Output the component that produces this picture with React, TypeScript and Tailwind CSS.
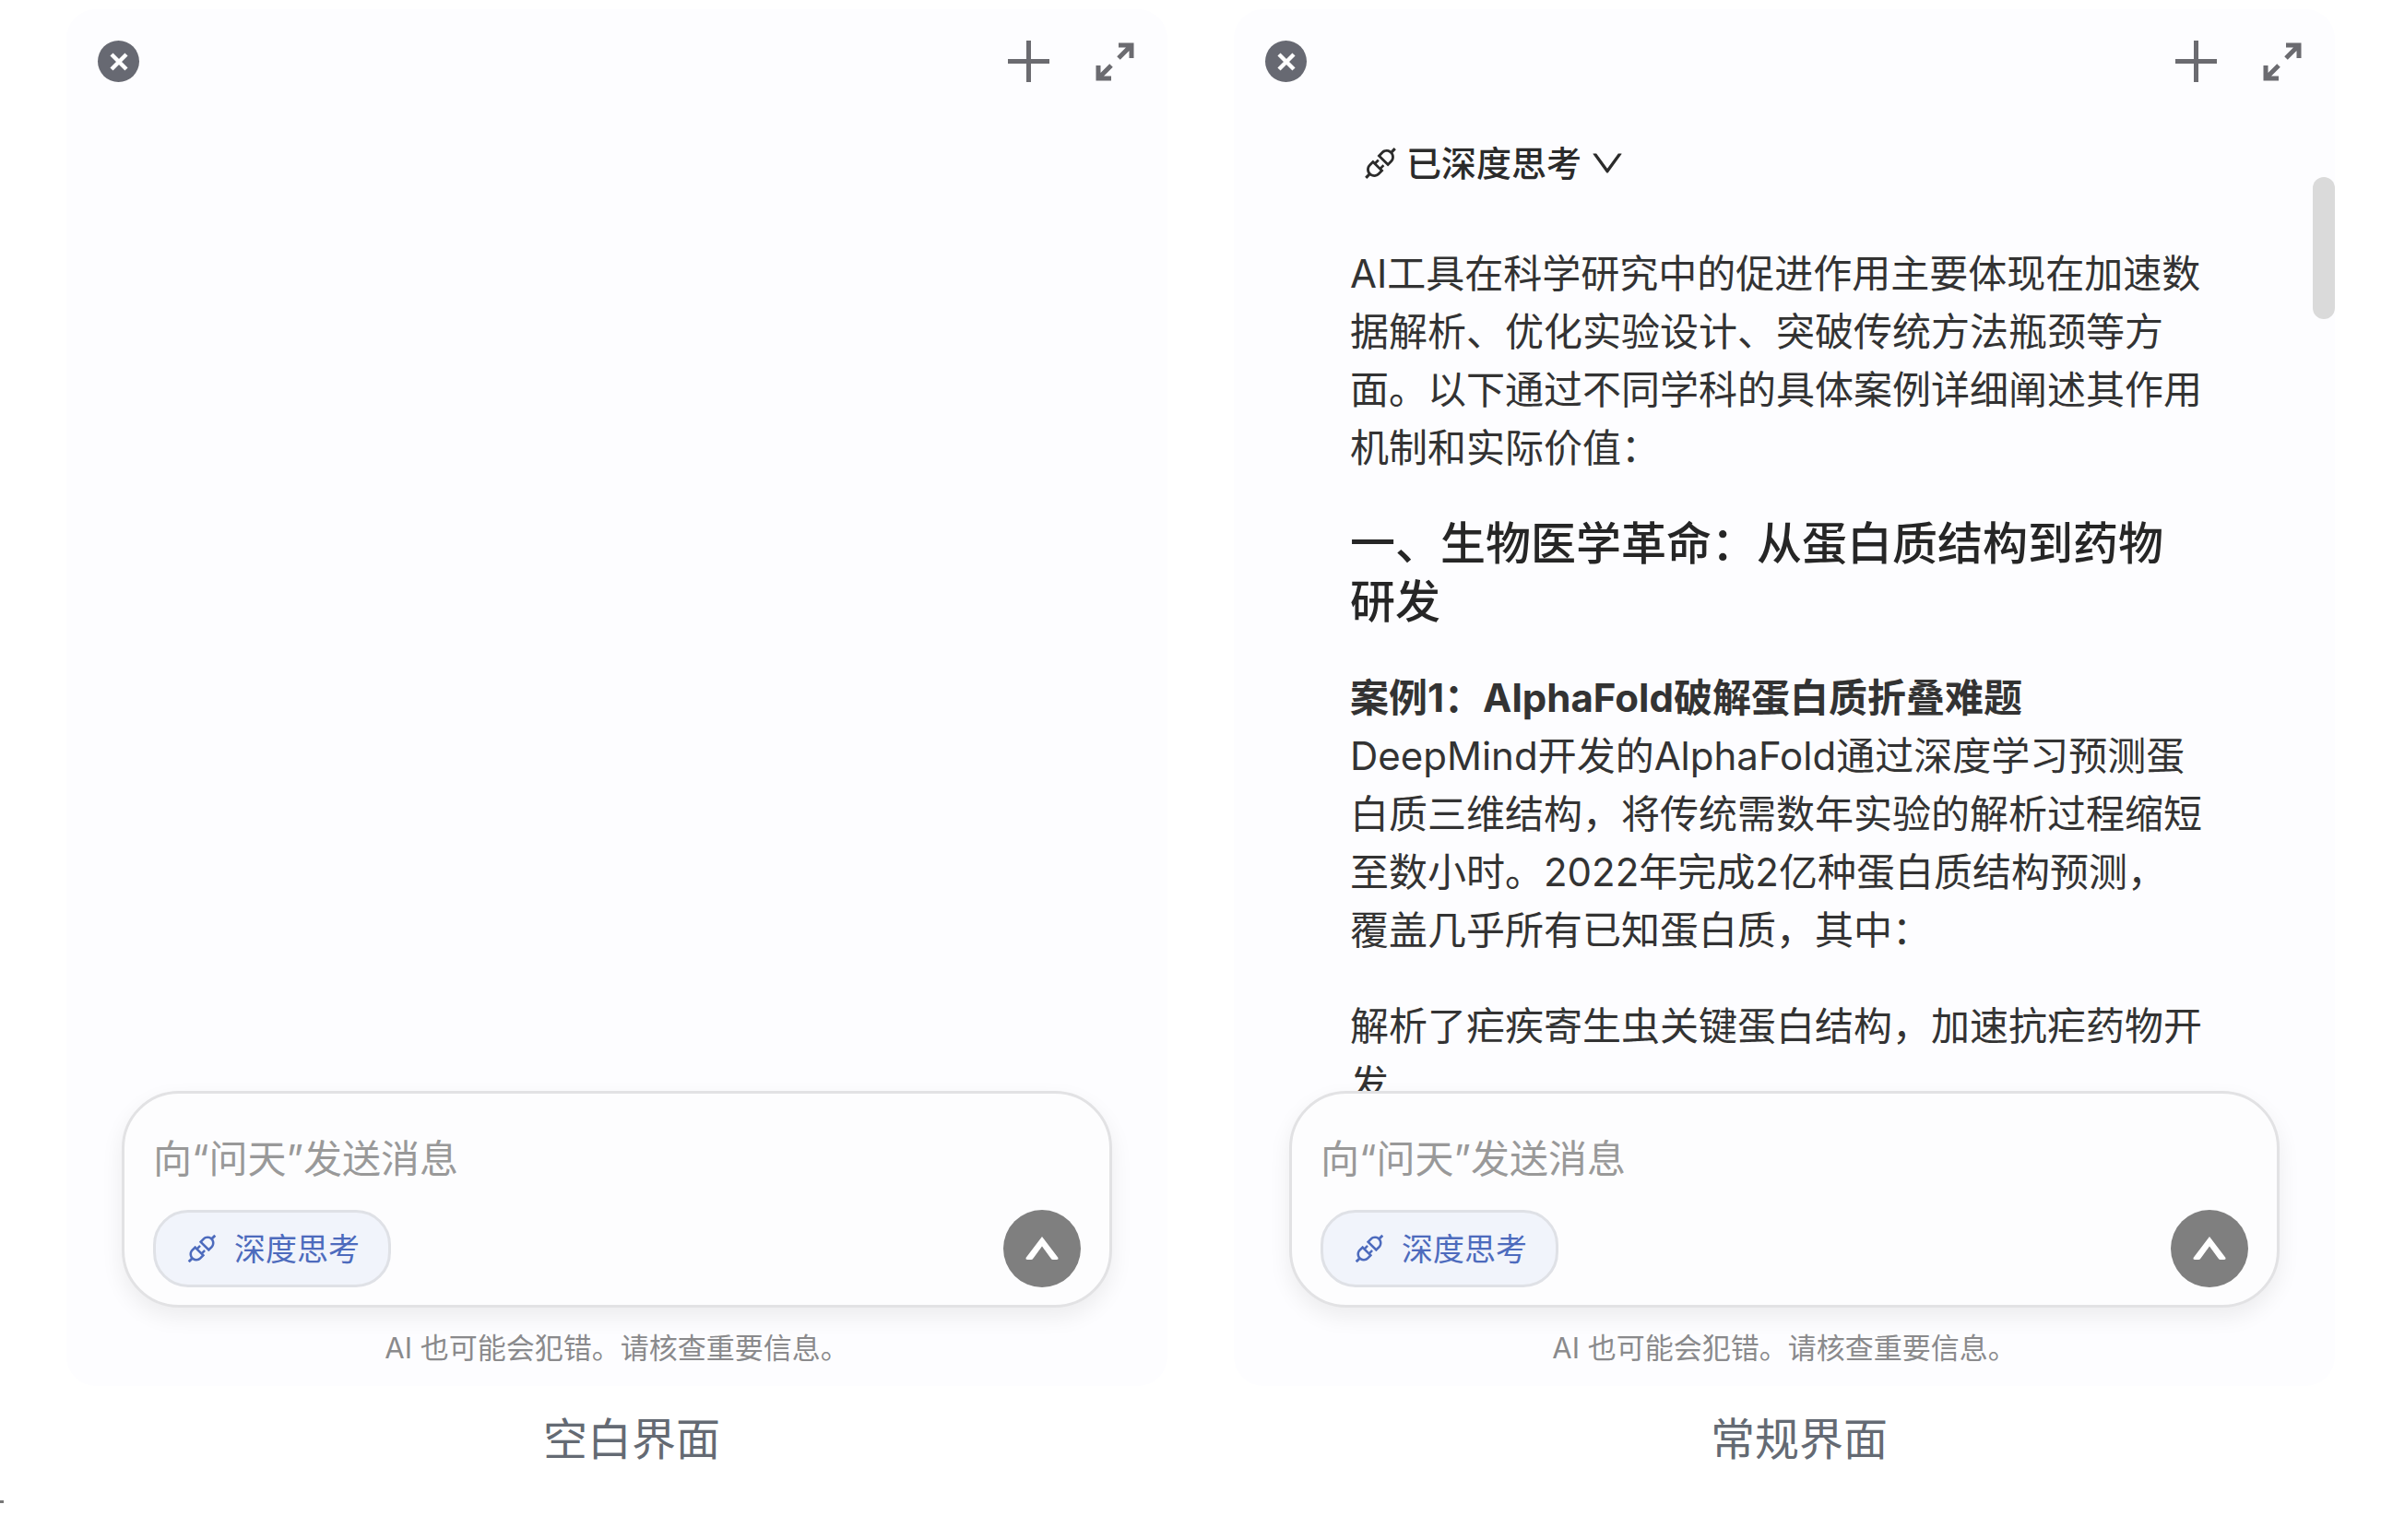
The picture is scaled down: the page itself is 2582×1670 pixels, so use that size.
import { useState } from "react";
import { AiOutlineApi, AiOutlineDown } from "react-icons/ai";

const PanelHeader = () => (
  <header className="flex shrink-0 items-center justify-between pt-[34px] pr-9 pl-[34px]">
    <button
      aria-label="关闭"
      className="flex h-[45px] w-[45px] items-center justify-center rounded-full bg-[#676972]"
    >
      <svg viewBox="0 0 20 20" className="h-5 w-5" stroke="#ffffff" strokeWidth="4.4">
        <path d="M2 2L18 18M18 2L2 18" />
      </svg>
    </button>
    <div className="flex items-center gap-[50px]">
      <button aria-label="新建对话">
        <svg viewBox="0 0 45 45" className="h-[45px] w-[45px]" stroke="#6b6b70" strokeWidth="5">
          <path d="M22.5 0V45M0 22.5H45" />
        </svg>
      </button>
      <button aria-label="展开">
        <svg
          viewBox="0 0 42 42"
          className="h-[42px] w-[42px]"
          fill="none"
          stroke="#6b6b70"
          strokeWidth="5"
        >
          <path d="M25 3H39V17M39 3L25 17" />
          <path d="M17 39H3V25M3 39L17 25" />
        </svg>
      </button>
    </div>
  </header>
);

const MessageBox = ({ id }: { id: string }) => {
  const [message, setMessage] = useState("");
  const [deepThink, setDeepThink] = useState(true);

  return (
    <div className="shrink-0 px-[60px] pb-[21px]">
      <form
        className="rounded-[62px] border-3 border-[#e2e2e4] bg-[#fdfdfe] px-[31px] pt-[38px] pb-[19px] shadow-[0_10px_24px_rgba(0,0,0,0.07)]"
        onSubmit={(e) => e.preventDefault()}
      >
        <input
          id={id}
          type="text"
          aria-label="消息"
          value={message}
          onChange={(e) => setMessage(e.target.value)}
          placeholder="向“问天”发送消息"
          className="block h-16 w-full bg-transparent text-[42px] text-[#333333] outline-none placeholder:text-[#999999]"
        />
        <div className="mt-6 flex items-center justify-between">
          <button
            type="button"
            aria-pressed={deepThink}
            onClick={() => setDeepThink(!deepThink)}
            className="flex h-[84px] items-center gap-4 rounded-[38px] border-3 border-[#dfe1e6] bg-[#f1f4fb] px-[31px] text-[34px] text-[#4d6bbd]"
          >
            <AiOutlineApi className="h-[38px] w-[38px]" />
            深度思考
          </button>
          <button
            type="submit"
            aria-label="发送"
            className="flex h-[84px] w-[84px] items-center justify-center rounded-full bg-[#7f7f7f]"
          >
            <svg viewBox="0 0 36 26" className="h-[26px] w-9" fill="#ffffff">
              <path d="M18 0L35.5 23Q36 25 34 25H30Q28.5 25 27.5 23.5L18 10.5L8.5 23.5Q7.5 25 6 25H2Q0 25 .5 23Z" />
            </svg>
          </button>
        </div>
      </form>
      <p className="mt-6 text-center text-[31px] leading-10 text-[#8a8a8c]">
        AI 也可能会犯错。请核查重要信息。
      </p>
    </div>
  );
};

const Answer = () => (
  <div className="flex items-start">
    <article className="flex-1 pt-[58px] pr-[118px] pl-[126px] text-[42px] leading-[63px] text-[#333333]">
      <button
        aria-expanded="false"
        className="ml-3 flex items-center gap-[7px] text-[38px] leading-[60px] font-medium text-[#2b2b2b]"
      >
        <AiOutlineApi className="h-[42px] w-[42px]" />
        已深度思考
        <AiOutlineDown className="h-[42px] w-[42px]" />
      </button>
      <div className="mt-[58px] flex flex-col gap-[41px]">
        <p>
          AI工具在科学研究中的促进作用主要体现在加速数据解析、优化实验设计、突破传统方法瓶颈等方面。以下通过不同学科的具体案例详细阐述其作用机制和实际价值：
        </p>
        <h2 className="text-[49px] font-medium text-[#262626]">
          一、生物医学革命：从蛋白质结构到药物研发
        </h2>
        <div>
          <h3 className="font-bold">案例1：AlphaFold破解蛋白质折叠难题</h3>
          <p>
            DeepMind开发的AlphaFold通过深度学习预测蛋白质三维结构，将传统需数年实验的解析过程缩短至数小时。2022年完成2亿种蛋白质结构预测，覆盖几乎所有已知蛋白质，其中：
          </p>
        </div>
        <p>解析了疟疾寄生虫关键蛋白结构，加速抗疟药物开发</p>
      </div>
    </article>
    {/* Scroll thumb */}
    <div className="mt-[103px] h-[154px] w-6 shrink-0 rounded-full bg-[#dadada]" />
  </div>
);

type PanelProps = {
  id: string;
  caption: string;
  children?: React.ReactNode;
};

const ChatPanel = ({ id, caption, children }: PanelProps) => (
  <figure className="flex min-h-0 min-w-0 flex-col">
    <section className="flex min-h-0 flex-1 flex-col rounded-[32px] bg-[#fdfdff]">
      <PanelHeader />
      <div className="min-h-0 flex-1 overflow-hidden">{children}</div>
      <MessageBox id={id} />
    </section>
    <figcaption className="mt-7 pl-8 text-center text-5xl leading-[60px] text-[#646a73]">
      {caption}
    </figcaption>
  </figure>
);

const App = () => {
  return (
    <div
      lang="zh-CN"
      className="flex h-screen flex-col bg-white pt-[10px] font-['Inter','Noto_Sans_CJK_SC',sans-serif]"
    >
      <main className="grid min-h-0 flex-1 grid-cols-2 grid-rows-1 gap-[72px] pr-[50px] pl-[72px]">
        <ChatPanel id="message-blank" caption="空白界面" />
        <ChatPanel id="message-normal" caption="常规界面">
          <Answer />
        </ChatPanel>
      </main>
      <div className="mt-9 mb-10 h-[3px] w-1 shrink-0 bg-[#777777]" />
    </div>
  );
};

export default App;
